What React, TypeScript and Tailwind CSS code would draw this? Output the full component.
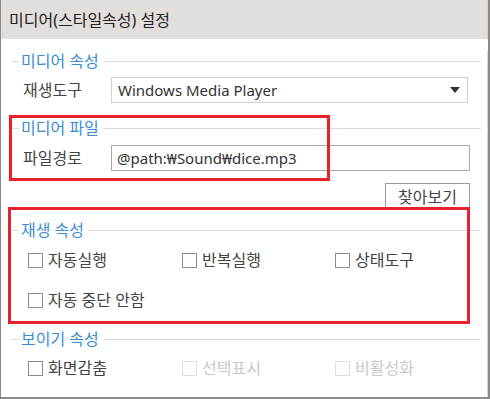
const font = { fontFamily: '"Noto Sans", "Noto Sans CJK KR", sans-serif' };

function Legend({ title, className = '' }: { title: string; className?: string }) {
  return (
    <div className={`flex items-center h-[20px] ${className}`}>
      <div className="w-[7px] h-px bg-[#d5dde6]" />
      <span className="ml-[2px] mr-[4px] text-[16px] leading-[20px] text-[#3a8dd6]">{title}</span>
      <div className="flex-1 h-px bg-[#d5dde6]" />
    </div>
  );
}

function Check({ label, disabled = false }: { label: string; disabled?: boolean }) {
  return (
    <div className="flex items-center h-[20px]">
      <div
        className={`w-[15px] h-[15px] border bg-white ${disabled ? 'border-[#dedede]' : 'border-[#8c8c8c]'}`}
      />
      <span className={`ml-[5px] text-[16px] leading-[20px] ${disabled ? 'text-[#c9c9c9]' : 'text-[#444]'}`}>
        {label}
      </span>
    </div>
  );
}

export default function App() {
  return (
    <div
      style={font}
      className="relative w-[490px] h-[399px] bg-white border-l border-r-2 border-b-2 border-[#8a8a8a] overflow-hidden"
    >
      {/* Title bar */}
      <div className="h-[39px] bg-[#e1dedc] flex items-center pl-[8px] border-r border-[#d0d0d0]">
        <span className="text-[16px] text-[#222]">미디어(스타일속성) 설정</span>
      </div>

      <div className="pl-[11px] pr-[6px] border-r border-[#d8d8d8] h-[358px]">
        {/* 미디어 속성 */}
        <Legend title="미디어 속성" className="mt-[12px]" />
        <div className="flex items-center mt-[6px]">
          <span className="w-[99px] pl-[11px] text-[16px] text-[#444]">재생도구</span>
          <div className="w-[357px] h-[26px] border border-[#d0d0d0] flex items-center justify-between pl-[6px] pr-[7px]">
            <span className="text-[15px] text-[#333]">Windows Media Player</span>
            <svg width="10" height="6" viewBox="0 0 10 6">
              <path d="M0 0 L10 0 L5 6 Z" fill="#333" />
            </svg>
          </div>
        </div>

        {/* 미디어 파일 */}
        <Legend title="미디어 파일" className="mt-[15px]" />
        <div className="flex items-center mt-[7px]">
          <span className="w-[99px] pl-[11px] text-[16px] text-[#444]">파일경로</span>
          <div className="w-[359px] h-[26px] border border-[#a8a8a8] flex items-center pl-[5px]">
            <span className="text-[15px] text-[#333]">@path:₩Sound₩dice.mp3</span>
          </div>
        </div>
        <div className="flex justify-end mt-[12px] pr-[11px]">
          <button className="w-[85px] h-[27px] border border-[#9a9a9a] bg-white text-[16px] text-[#444] leading-none">
            찾아보기
          </button>
        </div>

        {/* 재생 속성 */}
        <Legend title="재생 속성" className="mt-[10px]" />
        <div className="grid grid-cols-[154px_153px_120px] pl-[16px] mt-[10px]">
          <Check label="자동실행" />
          <Check label="반복실행" />
          <Check label="상태도구" />
        </div>
        <div className="pl-[16px] mt-[20px]">
          <Check label="자동 중단 안함" />
        </div>

        {/* 보이기 속성 */}
        <Legend title="보이기 속성" className="mt-[19px]" />
        <div className="grid grid-cols-[154px_153px_120px] pl-[16px] mt-[9px]">
          <Check label="화면감춤" />
          <Check label="선택표시" disabled />
          <Check label="비활성화" disabled />
        </div>
      </div>

      {/* Annotation boxes */}
      <div className="absolute left-[8px] top-[115px] w-[321px] h-[66px] border-[3px] border-[#e8222c] pointer-events-none" />
      <div className="absolute left-[7px] top-[207px] w-[462px] h-[117px] border-[3px] border-[#e8222c] pointer-events-none" />
    </div>
  );
}
